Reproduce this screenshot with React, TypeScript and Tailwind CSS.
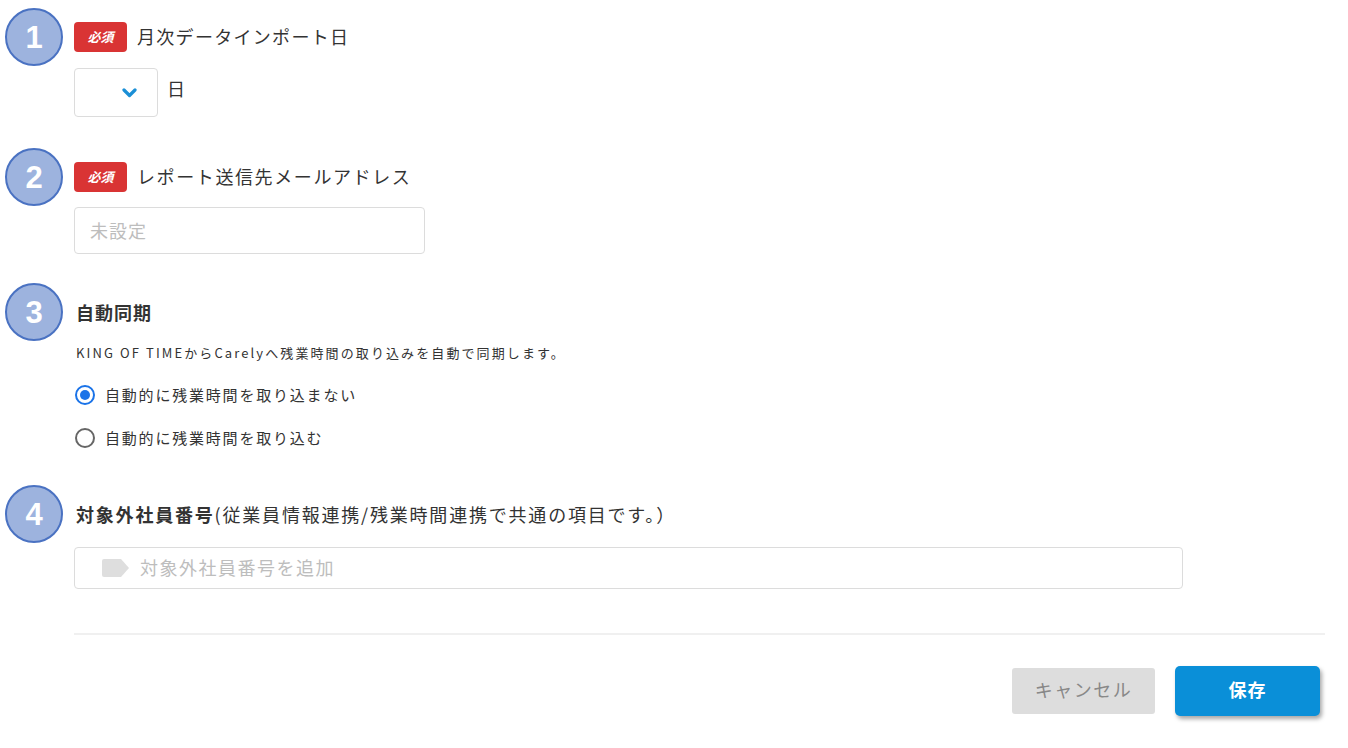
import React from "react";

const font = { fontFamily: '"Noto Sans CJK JP", "Noto Sans", sans-serif' };

function Callout({ n }: { n: number }) {
  return (
    <div className="absolute left-[-69px] top-1/2 flex h-[58px] w-[58px] -translate-y-1/2 items-center justify-center rounded-full border-2 border-[#4a72c2] bg-[#9db3de]">
      <span className="text-[31px] font-bold leading-none text-white" style={{ fontFamily: '"Liberation Sans", Arial, sans-serif' }}>
        {n}
      </span>
    </div>
  );
}

function Required() {
  return (
    <span className="flex h-[30px] w-[53px] items-center justify-center rounded-[4px] bg-[#d93434] text-[13px] font-bold italic text-white">
      必須
    </span>
  );
}

function Radio({ checked, label }: { checked?: boolean; label: string }) {
  return (
    <label className="flex h-[20px] items-center gap-[10px]">
      {checked ? (
        <span className="flex h-[20px] w-[20px] items-center justify-center rounded-full border-2 border-[#1a73e8]">
          <span className="h-[10px] w-[10px] rounded-full bg-[#1a73e8]" />
        </span>
      ) : (
        <span className="h-[20px] w-[20px] rounded-full border-2 border-[#666]" />
      )}
      <span className="text-[15px] tracking-[1.8px] text-[#333]">{label}</span>
    </label>
  );
}

export default function App() {
  return (
    <div className="min-h-[748px] bg-white text-[#333]" style={font}>
      <div className="w-[1325px] pl-[74px] pt-[22px]">
        {/* 1 */}
        <div className="relative flex h-[30px] items-center gap-[10px]">
          <Callout n={1} />
          <Required />
          <span className="mb-[2px] text-[18px] tracking-[1.3px]">月次データインポート日</span>
        </div>
        <div className="mt-[16px] flex items-center gap-[9px]">
          <div className="flex h-[49px] w-[84px] items-center justify-end rounded-[4px] border border-[#dcdcdc] pr-[20px]">
            <svg width="15" height="10" viewBox="0 0 15 10">
              <polyline points="2,2 7.5,7.5 13,2" fill="none" stroke="#1b8fd6" strokeWidth="3.2" strokeLinecap="round" strokeLinejoin="round" />
            </svg>
          </div>
          <span className="mb-[9px] text-[18px]">日</span>
        </div>

        {/* 2 */}
        <div className="relative mt-[45px] flex h-[30px] items-center gap-[10px]">
          <Callout n={2} />
          <Required />
          <span className="mb-[2px] text-[18px] tracking-[1.6px]">レポート送信先メールアドレス</span>
        </div>
        <div className="mt-[15px] flex h-[47px] w-[351px] items-center rounded-[4px] border border-[#dcdcdc] px-[15px]">
          <span className="text-[18px] tracking-[1px] text-[#bdbdbd]">未設定</span>
        </div>

        {/* 3 */}
        <div className="relative mt-[43px] flex h-[30px] items-center pl-[2px]">
          <Callout n={3} />
          <span className="text-[18px] font-bold tracking-[1px]">自動同期</span>
        </div>
        <p className="mt-[16px] h-[20px] pl-[2px] text-[13px] leading-[20px] tracking-[2.1px]">
          KING OF TIMEからCarelyへ残業時間の取り込みを自動で同期します。
        </p>
        <div className="mt-[22px] pl-[1px]">
          <Radio checked label="自動的に残業時間を取り込まない" />
        </div>
        <div className="mt-[23px] pl-[1px]">
          <Radio label="自動的に残業時間を取り込む" />
        </div>

        {/* 4 */}
        <div className="relative mt-[51px] flex h-[30px] items-center pl-[2px]">
          <Callout n={4} />
          <span className="text-[18px] tracking-[1.8px]">
            <span className="font-bold">対象外社員番号</span>
            (従業員情報連携/残業時間連携で共通の項目です。）
          </span>
        </div>
        <div className="mt-[18px] flex h-[42px] w-[1109px] items-center gap-[10px] rounded-[4px] border border-[#dcdcdc] pl-[26px]">
          <svg width="29" height="20" viewBox="0 0 29 20">
            <path d="M3 1 H20 L28 10 L20 19 H3 Q1 19 1 17 V3 Q1 1 3 1 Z" fill="#dedede" />
          </svg>
          <span className="mb-[2px] text-[18px] tracking-[1.5px] text-[#bdbdbd]">対象外社員番号を追加</span>
        </div>

        <div className="mt-[44px] h-[2px] bg-[#f0f0f0]" />

        <div className="mt-[31px] flex items-center justify-end gap-[20px] pr-[5px]">
          <button className="h-[46px] w-[143px] rounded-[3px] bg-[#dddddd] pb-[3px] text-[18px] tracking-[1.5px] text-[#888]">
            キャンセル
          </button>
          <button className="h-[50px] w-[145px] rounded-[5px] bg-[#0a8fd8] pb-[4px] text-[18px] font-bold tracking-[1px] text-white shadow-[2px_3px_4px_rgba(0,0,0,0.35)]">
            保存
          </button>
        </div>
      </div>
    </div>
  );
}
